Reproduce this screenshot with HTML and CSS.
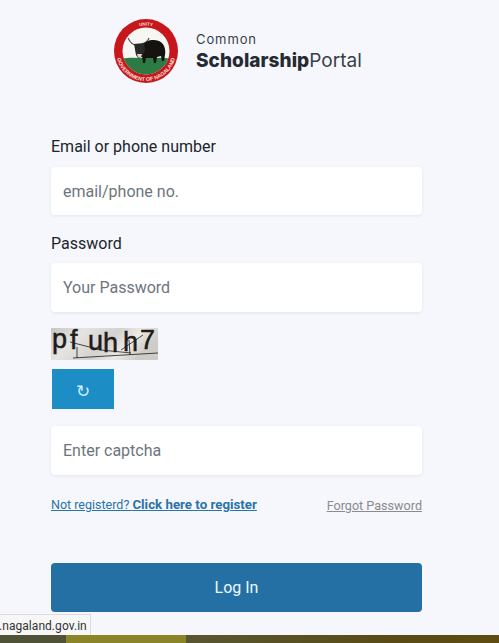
FILE: index.html
```html
<!DOCTYPE html>
<html lang="en">
<head>
<meta charset="utf-8">
<title>Common Scholarship Portal</title>
<link rel="stylesheet" href="styles.css">
</head>
<body>
<div class="page">
  <header class="brand">
    <svg class="emblem" viewBox="0 0 66 66" aria-label="Government of Nagaland emblem">
      <defs>
        <path id="arcTop" d="M7.500 33a25.500 25.500 0 0 1 51 0"/>
        <path id="arcBottom" d="M3 33a30 30 0 0 0 60 0"/>
        <clipPath id="inner"><circle cx="33" cy="33" r="23.500"/></clipPath>
      </defs>
      <circle cx="33" cy="33" r="32" fill="#c8161d"/>
      <circle cx="33" cy="33" r="23.500" fill="#f6f6f2"/>
      <g clip-path="url(#inner)">
        <path d="M8 41c8-2 16-1 25-1s18-1 25 1v18H8z" fill="#2e7a45"/>
        <path d="M23 27C19 27 17 24 15 20M29 26C32 25 35 24 36 20" class="horns"/>
        <path d="M29 28C33 22 40 21 46 23C51 25 53 31 52 37L51 43H49L48 38L44 39L43 45H41L40 40L33 40L32 45H30L29 38Z" fill="#14130f"/>
        <path d="M21 26L31 25L32 32L29 39L25 40L23 37Z" fill="#2b2925"/>
        <path d="M24 36L29 36L28 39L25 39.500Z" fill="#d9d7cf"/>
      </g>
      <text class="emblem-top"><textPath href="#arcTop" startOffset="50%">UNITY</textPath></text>
      <text class="emblem-bottom"><textPath href="#arcBottom" startOffset="50%">GOVERNMENT OF NAGALAND</textPath></text>
    </svg>
    <div class="brand-text">
      <div class="brand-line">Common</div>
      <div class="brand-name"><strong>Scholarship</strong>Portal</div>
    </div>
  </header>

  <form class="form">
    <label class="label first">Email or phone number</label>
    <input class="field" type="text" placeholder="email/phone no.">
    <label class="label">Password</label>
    <input class="field tall" type="password" placeholder="Your Password">
    <svg class="captcha" viewBox="0 0 107 32" aria-label="captcha">
      <defs>
        <linearGradient id="noise" x1="0" x2="1" y1="0" y2="0.300">
          <stop offset="0" stop-color="#c9c6c1"/>
          <stop offset="0.300" stop-color="#e6e4e1"/>
          <stop offset="0.600" stop-color="#d4d2ce"/>
          <stop offset="0.800" stop-color="#ece9e5"/>
          <stop offset="1" stop-color="#cfccc7"/>
        </linearGradient>
      </defs>
      <rect width="107" height="32" fill="url(#noise)"/>
      <text class="captcha-text" x="1 19 37 52 72 89" y="20 21 22 24 23 21">pfuhh7</text>
      <path d="M22 30L107 25M26 19L26 30M19 14L50 22L80 25M70 22L92 7M78 12L79 27" class="captcha-lines"/>
    </svg>
    <button class="refresh" type="button">↻</button>
    <input class="field captcha-field" type="text" placeholder="Enter captcha">
    <div class="links">
      <a class="register" href="#">Not registerd? <strong>Click here to register</strong></a>
      <a class="forgot" href="#">Forgot Password</a>
    </div>
    <button class="login" type="button">Log In</button>
  </form>
  <div class="status">.nagaland.gov.in</div>
  <div class="strip"><span class="strip-a"></span><span class="strip-b"></span><span class="strip-c"></span></div>
</div>
</body>
</html>
```
FILE: styles.css
```css
* { box-sizing: border-box; }
html, body { margin: 0; height: 100%; }
body {
  background: #f5f7fd;
  font-family: Roboto, "Liberation Sans", sans-serif;
  color: #212529;
  overflow: hidden;
}
.page {
  position: relative;
  height: 643px;
  padding-top: 18px;
  display: flex;
  flex-direction: column;
}
.brand {
  display: flex;
  align-items: center;
  gap: 17px;
  padding-left: 113px;
  height: 66px;
}
.emblem { width: 66px; height: 66px; display: block; }
.emblem-top, .emblem-bottom { fill: #f4e3dc; font-family: "Liberation Sans", sans-serif; font-weight: 700; text-anchor: middle; }
.emblem-top { font-size: 4.500px; }
.emblem-bottom { font-size: 5.300px; }
.horns { fill: none; stroke: #55534e; stroke-width: 1.200; }
.brand-text { font-family: Inter, "Open Sans", sans-serif; color: #3a3f47; padding-top: 3px; }
.brand-line { font-size: 13px; line-height: 15px; letter-spacing: .9px; }
.brand-name { font-size: 19px; line-height: 24px; margin-top: 2px; color: #3a3f47; letter-spacing: .05px; white-space: nowrap; }
.brand-name strong { color: #262a31; font-weight: 800; }
.form {
  display: flex;
  flex-direction: column;
  align-items: flex-start;
  width: 371px;
  margin: 0 0 0 51px;
}
.label { font-size: 16px; line-height: 26px; color: #212529; margin-bottom: 6px; }
.label.first { margin-top: 50px; margin-bottom: 7px; }
.field {
  width: 100%;
  height: 48px;
  border: 0;
  border-radius: 4px;
  background: #fff;
  padding: 0 12px;
  font: 16px Roboto, sans-serif;
  color: #212529;
  box-shadow: 0 1px 3px rgba(30, 40, 70, .09);
  margin-bottom: 16px;
}
.field.tall { height: 49px; }
.field::placeholder { color: #6c757d; opacity: 1; }
.captcha { display: block; width: 107px; height: 32px; margin-bottom: 9px; }
.captcha-text { font: 400 27px "Liberation Sans", sans-serif; fill: #1c1c1a; stroke: #1c1c1a; stroke-width: .5; }
.captcha-lines { fill: none; stroke: #1c1c1a; stroke-width: .8; }
.refresh {
  width: 62px;
  height: 40px;
  margin: 0 0 17px 1px;
  border: 0;
  background: #1d8dc6;
  color: #d5f0fa;
  font: 17px "DejaVu Sans", sans-serif;
  padding: 3px 0 0;
}
.captcha-field { margin-bottom: 0; height: 49px; }
.links {
  width: 100%;
  display: flex;
  justify-content: space-between;
  align-items: center;
  margin-top: 20px;
  height: 18px;
}
.register { color: #2a73a5; font-size: 12.500px; }
.register strong { font-weight: 700; font-size: 13.300px; }
.forgot { color: #8a8a8f; font-size: 12.600px; padding-top: 3px; }
.login {
  width: 100%;
  height: 49px;
  margin-top: 50px;
  border: 0;
  border-radius: 4px;
  background: #2470a4;
  color: #eef8fd;
  font: 400 16px Roboto, sans-serif;
}
.status {
  position: absolute;
  left: -2px;
  top: 614px;
  height: 21px;
  width: 93px;
  background: #f7f7f8;
  border: 1px solid #dcdcdf;
  border-bottom: 0;
  font: 12px/23px Roboto, sans-serif;
  letter-spacing: .05px;
  color: #333;
  white-space: nowrap;
}
.strip {
  display: flex;
  margin-top: auto;
  height: 8px;
}
.strip-a { width: 66px; background: #4f5236; }
.strip-b { width: 120px; background: #8b8429; }
.strip-c { flex: 1; background: linear-gradient(90deg, #575631, #5a4a14 70%, #5e4c12); }
```
